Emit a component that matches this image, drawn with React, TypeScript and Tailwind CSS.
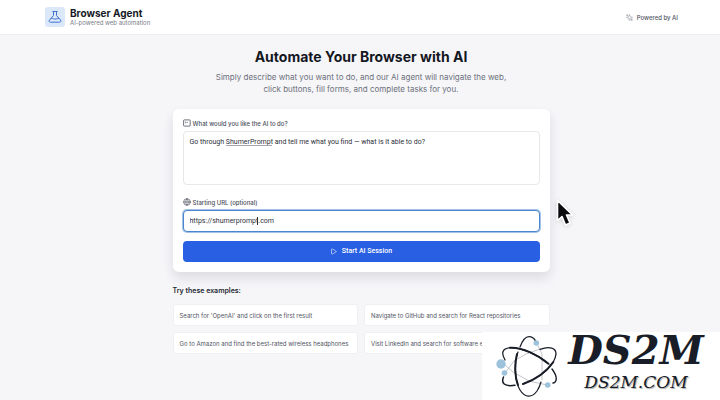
import React, { useState } from "react";
import { Globe, Play, Sparkles } from "lucide-react";

const examples = [
  "Search for 'OpenAI' and click on the first result",
  "Navigate to GitHub and search for React repositories",
  "Go to Amazon and find the best-rated wireless headphones",
  "Visit LinkedIn and search for software en",
];

function FlaskIcon() {
  return (
    <svg className="size-[14px] text-[#4273cf]" viewBox="0 0 14 14" fill="none" stroke="currentColor" strokeWidth="1" strokeLinecap="round" strokeLinejoin="round">
      <path d="M4.800 1.500H9.200M5.500 1.500V5.500L1.500 10C.7 11.200 1.200 12.200 2.500 12.200H11.500C12.800 12.200 13.300 11.200 12.500 10L8.500 5.500V1.500" />
      <path d="M3.500 8.500C5 8 6 9.500 8 9C9 8.700 9.500 8.500 10.500 8.500" />
    </svg>
  );
}

function PromptIcon() {
  return (
    <svg className="size-[8px]" viewBox="0 0 8 8" fill="none" stroke="currentColor" strokeWidth="0.8">
      <rect x="0.600" y="0.900" width="6.600" height="6.200" rx="0.600" />
      <path d="M2 2.600L3 3.400L2 4.200M3.500 3.400H5" strokeWidth="0.6" />
    </svg>
  );
}

function Header() {
  return (
    <header className="bg-white border-b border-[#ebecef]">
      <div className="max-w-[636px] pl-[3px] mx-auto h-[34px] flex items-center justify-between">
        <div className="flex items-center gap-[5px]">
          <div className="size-5 rounded-[3px] bg-[#dbe8fa] flex items-center justify-center">
            <FlaskIcon />
          </div>
          <div>
            <h1 className="text-[10px] leading-3 font-bold text-[#161a26]">Browser Agent</h1>
            <p className="text-[6px] leading-[8px] text-[#7b808b]">AI-powered web automation</p>
          </div>
        </div>
        <div className="flex items-center gap-1 text-[#50545f]">
          <Sparkles className="size-[7px] -scale-x-100 text-[#8d919a]" />
          <span className="text-[6px] font-medium">Powered by AI</span>
        </div>
      </div>
    </header>
  );
}

function AgentForm() {
  const [task, setTask] = useState(
    "Go through ShumerPrompt and tell me what you find — what is it able to do?"
  );
  const [url, setUrl] = useState("https://shumerprompt.com");

  return (
    <form
      onSubmit={(e) => e.preventDefault()}
      className="mt-[14px] bg-white rounded-[6px] p-[10px] shadow-[0_6px_12px_rgba(30,35,60,0.12)]"
    >
      <label htmlFor="task" className="flex items-center gap-[2px] h-2 text-[6px] font-medium text-[#4b505c]">
        <PromptIcon />
        What would you like the AI to do?
      </label>
      <div className="relative mt-1">
        <textarea
          id="task"
          value={task}
          onChange={(e) => setTask(e.target.value)}
          className="block w-full h-[54px] resize-none rounded-[4px] border border-[#e7e8ec] bg-white px-[6px] py-[5px] font-['Roboto',sans-serif] text-[7px] leading-[10px] text-[#2d313c] outline-none"
        />
        {/* spelling mark */}
        <span className="absolute left-[43px] top-[14px] w-[46px] border-b border-[#a5a7ae]" />
      </div>

      <label htmlFor="url" className="mt-[13px] flex items-center gap-[2px] h-2 text-[6px] font-medium text-[#4b505c]">
        <Globe className="size-[8px]" />
        Starting URL (optional)
      </label>
      <div className="relative mt-1">
        <input
          id="url"
          type="text"
          value={url}
          onChange={(e) => setUrl(e.target.value)}
          className="block w-full h-[22px] rounded-[4px] border border-[#4a86cd] ring-1 ring-[#4a86cd]/50 bg-white px-[6px] font-['Roboto',sans-serif] text-[7px] text-[#2d313c] outline-none"
        />
        {/* caret */}
        <span className="absolute left-[74px] top-[7px] h-2 w-px bg-[#2d313c]" />
      </div>

      <button
        type="submit"
        className="mt-[9px] w-full h-[21px] rounded-[4px] bg-[#285fe3] font-['Roboto',sans-serif] text-white text-[7px] font-medium flex items-center justify-center gap-[5px]"
      >
        <Play className="size-[7px]" />
        Start AI Session
      </button>
    </form>
  );
}

function Pointer() {
  return (
    <svg className="absolute left-[556px] top-[199px] w-[18px] h-[28px] drop-shadow-sm" viewBox="0 0 18 28">
      <path
        d="M1.5 1.5V21.5L6 17.5L9.5 26L14 24L10.5 16H16.5Z"
        fill="#0b0b0d"
        stroke="#fff"
        strokeWidth="1.6"
        strokeLinejoin="round"
      />
    </svg>
  );
}

function Watermark() {
  return (
    <div className="absolute right-0 bottom-0 w-[238px] h-[68px] bg-white flex items-center text-[#191d27]">
      <svg className="ml-[14px] w-[64px] h-[64px] shrink-0" viewBox="0 0 64 64" fill="none">
        <g stroke="#b4b6bc" strokeWidth="0.8">
          <path d="M41 10L46 20V46" />
          <path d="M8 30L17 38L33 47L51 51" />
          <path d="M9 39L18 27L30 20L44 15" />
        </g>
        <g stroke="#191d27" strokeLinecap="round">
          <path d="M24 13C27 5 30 2.700 33 2.700C36 2.700 38 4 39.500 7" strokeWidth="1.3" />
          <path d="M22 18C18 29 18 46 24 56C29 64 36 64 41 57C43 54 44 52 45 48" strokeWidth="1.2" />
          <path d="M21 20C18.500 29 18.500 42 22 51" strokeWidth="2" />
          <path d="M9 26C5 19 6 15 14 13.700C24 13 43 21 53 30" strokeWidth="1.3" />
          <path d="M14 13.700C26 13 42 21 52 29.500" strokeWidth="2" />
          <path d="M56 35C62 43 61 48 57 49" strokeWidth="1.4" />
          <path d="M44 15.300C54 12 60 14 60 20C59 31 45 44 27 50" strokeWidth="1.3" />
          <path d="M57.300 28C51 37 41 45 27 50" strokeWidth="2" />
          <path d="M19 51.300C8 53 5 49 7.500 43" strokeWidth="1.5" />
        </g>
        <g fill="#9dc3dc">
          <circle cx="40.300" cy="9" r="2.800" />
          <circle cx="5" cy="30" r="4.700" />
          <circle cx="8.500" cy="39" r="2.800" />
          <circle cx="51.700" cy="51" r="2.800" />
        </g>
      </svg>
      <div className="flex-1 flex flex-col items-center pr-2 pb-2 font-['DejaVu_Serif',serif] italic">
        <span className="text-[40px] leading-[40px] font-bold">DS2M</span>
        <span className="text-[17px] leading-6 [text-shadow:1px_1px_1px_#aaa]">DS2M.COM</span>
      </div>
    </div>
  );
}

function App() {
  return (
    <div className="relative min-h-screen overflow-hidden bg-[#f6f6f9] font-['Inter',sans-serif]">
      <Header />
      <main className="max-w-[379px] pl-[2px] mx-auto pt-3 pb-10">
        <h2 className="text-center text-[14px] leading-5 font-bold text-[#14171f]">
          Automate Your Browser with AI
        </h2>
        <p className="mt-1 mx-auto max-w-[300px] text-center text-[8px] leading-3 text-[#6c707a]">
          Simply describe what you want to do, and our AI agent will navigate the web,
          <br />
          click buttons, fill forms, and complete tasks for you.
        </p>

        <AgentForm />

        <h3 className="mt-[14px] text-[7px] leading-[10px] font-semibold text-[#242833]">
          Try these examples:
        </h3>
        <div className="mt-2 grid grid-cols-2 gap-[6px]">
          {examples.map((example) => (
            <button
              key={example}
              className="h-[22px] rounded-[3px] border border-[#f0f0f3] bg-white px-[6px] text-left text-[6px] text-[#50545f] whitespace-nowrap"
            >
              {example}
            </button>
          ))}
        </div>
      </main>
      <Pointer />
      <Watermark />
    </div>
  );
}

export default App;
